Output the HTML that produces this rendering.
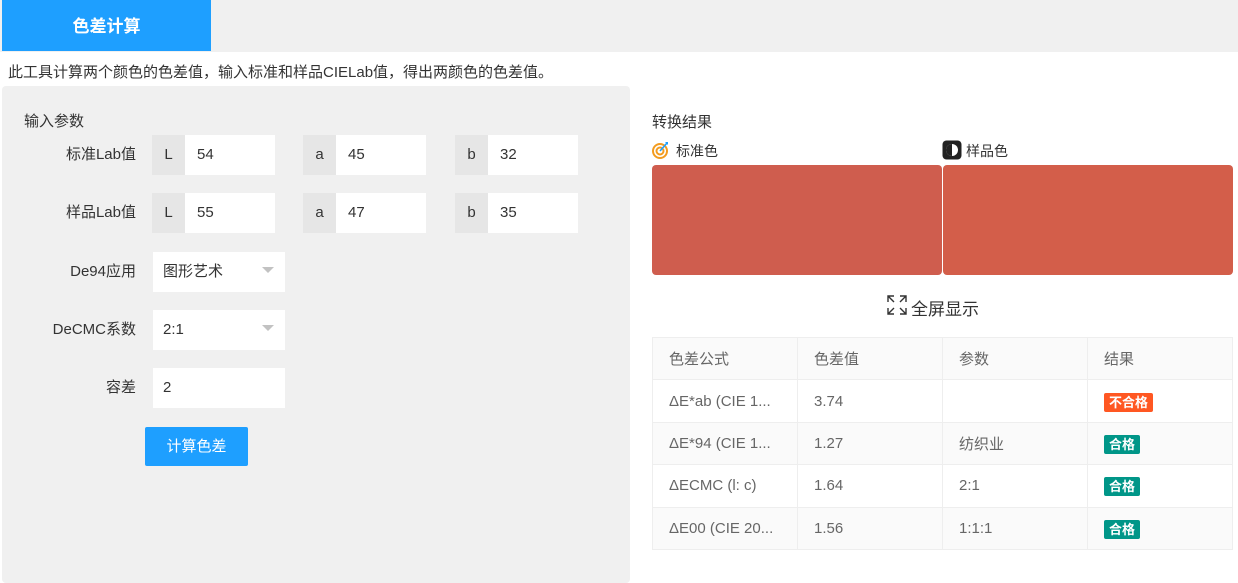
<!DOCTYPE html>
<html><head><meta charset="utf-8"><style>
*{box-sizing:border-box;margin:0;padding:0}
body{width:1238px;height:583px;background:#fff;font-family:"Liberation Sans","Noto Sans CJK SC",sans-serif;font-size:15px;color:#333;position:relative;overflow:hidden}
.abs{position:absolute}
.bar{left:0;top:0;width:1238px;height:52px;background:#f0f0f0}
.tab{left:2px;top:0;width:209px;height:51px;background:#1e9fff;color:#fff;font-size:17px;font-weight:bold;text-align:center;line-height:53px}
.desc{left:8px;top:61px;font-size:15px;color:#333}
.lp{left:2px;top:86px;width:628px;height:497px;background:#f0f0f0;border-radius:4px}
.lbl{text-align:right;width:110px;line-height:40px;color:#333}
.pre{background:#e6e6e6;width:33px;height:40px;line-height:40px;text-align:center}
.inp{background:#fff;height:40px;line-height:40px;padding-left:12px}
.btn{left:145px;top:427px;width:103px;height:39px;background:#1e9fff;color:#fff;text-align:center;line-height:39px;border-radius:2px}
.tri{width:0;height:0;border:6px solid transparent;border-top-color:#c2c2c2}
table{position:absolute;left:652px;top:337px;width:581px;border-collapse:collapse;font-size:15px;color:#666}
td{border:1px solid #eee;height:42.4px;padding-left:16px;width:145px}
tr:nth-child(odd){background:#fafafa}
.tag{color:#fff;font-size:13px;font-weight:bold;padding:2px 5px;border-radius:2px}
</style></head><body>
<div class="abs bar"></div>
<div class="abs tab">色差计算</div>
<div class="abs desc">此工具计算两个颜色的色差值，输入标准和样品CIELab值，得出两颜色的色差值。</div>
<div class="abs lp"></div>
<div class="abs" style="left:24px;top:110px">输入参数</div>

<div class="abs lbl" style="left:26px;top:135px">标准Lab值</div>
<div class="abs pre" style="left:152px;top:135px">L</div><div class="abs inp" style="left:185px;top:135px;width:90px">54</div>
<div class="abs pre" style="left:303px;top:135px">a</div><div class="abs inp" style="left:336px;top:135px;width:90px">45</div>
<div class="abs pre" style="left:455px;top:135px">b</div><div class="abs inp" style="left:488px;top:135px;width:90px">32</div>

<div class="abs lbl" style="left:26px;top:193px">样品Lab值</div>
<div class="abs pre" style="left:152px;top:193px">L</div><div class="abs inp" style="left:185px;top:193px;width:90px">55</div>
<div class="abs pre" style="left:303px;top:193px">a</div><div class="abs inp" style="left:336px;top:193px;width:90px">47</div>
<div class="abs pre" style="left:455px;top:193px">b</div><div class="abs inp" style="left:488px;top:193px;width:90px">35</div>

<div class="abs lbl" style="left:26px;top:252px">De94应用</div>
<div class="abs inp" style="left:153px;top:252px;width:132px;padding-left:10px">图形艺术</div>
<div class="abs tri" style="left:262px;top:267px"></div>
<div class="abs lbl" style="left:26px;top:310px">DeCMC系数</div>
<div class="abs inp" style="left:153px;top:310px;width:132px;padding-left:10px">2:1</div>
<div class="abs tri" style="left:262px;top:325px"></div>
<div class="abs lbl" style="left:26px;top:368px">容差</div>
<div class="abs inp" style="left:153px;top:368px;width:132px;padding-left:10px">2</div>
<div class="abs btn">计算色差</div>

<div class="abs" style="left:652px;top:111px">转换结果</div>
<svg class="abs" style="left:652px;top:140px" width="18" height="20" viewBox="0 0 18 20"><circle cx="8" cy="11" r="7" fill="none" stroke="#f39c1f" stroke-width="2"/><circle cx="8" cy="11" r="3.5" fill="none" stroke="#f39c1f" stroke-width="2"/><path d="M8 11L15 3" stroke="#1e9fff" stroke-width="1.6"/><path d="M13 2l3 0 0 3z" fill="#1e9fff"/></svg>
<div class="abs" style="left:676px;top:141px;font-size:14px">标准色</div>
<svg class="abs" style="left:942px;top:140px" width="20" height="20" viewBox="0 0 20 20"><rect x="0.5" y="0.5" width="19" height="19" rx="4" fill="#222"/><circle cx="10" cy="10" r="6" fill="#fff"/><path d="M10 4a6 6 0 0 0 0 12z" fill="#222"/></svg>
<div class="abs" style="left:966px;top:141px;font-size:14px">样品色</div>
<div class="abs" style="left:652px;top:165px;width:290px;height:110px;background:#cf5d4e;border-radius:4px"></div>
<div class="abs" style="left:943px;top:165px;width:290px;height:110px;background:#d35e4a;border-radius:4px"></div>
<svg class="abs" style="left:886px;top:294px" width="22" height="22" viewBox="0 0 22 22" fill="none" stroke="#333" stroke-width="1.4"><path d="M2 8V2h6M2 2l6 6M14 2h6v6M20 2l-6 6M2 14v6h6M2 20l6-6M20 14v6h-6M20 20l-6-6"/></svg>
<div class="abs" style="left:911px;top:295px;font-size:17px">全屏显示</div>

<table>
<tr><td>色差公式</td><td>色差值</td><td>参数</td><td>结果</td></tr>
<tr><td>ΔE*ab (CIE 1...</td><td>3.74</td><td></td><td><span class="tag" style="background:#ff5722">不合格</span></td></tr>
<tr><td>ΔE*94 (CIE 1...</td><td>1.27</td><td>纺织业</td><td><span class="tag" style="background:#009688">合格</span></td></tr>
<tr><td>ΔECMC (l: c)</td><td>1.64</td><td>2:1</td><td><span class="tag" style="background:#009688">合格</span></td></tr>
<tr><td>ΔE00 (CIE 20...</td><td>1.56</td><td>1:1:1</td><td><span class="tag" style="background:#009688">合格</span></td></tr>
</table>
</body></html>
